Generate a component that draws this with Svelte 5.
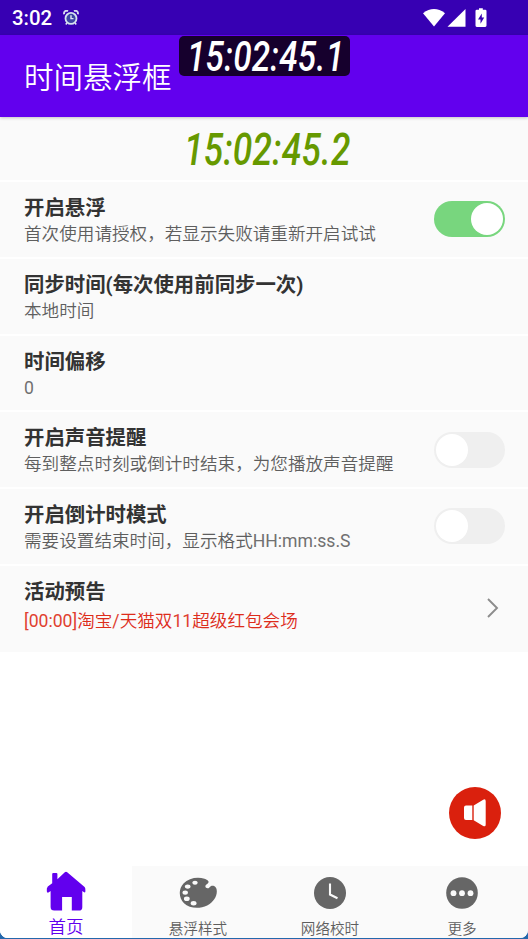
<script>
  const rows = [
    { title: '开启悬浮', sub: '首次使用请授权，若显示失败请重新开启试试', toggle: true, on: true },
    { title: '同步时间(每次使用前同步一次)', sub: '本地时间' },
    { title: '时间偏移', sub: '0' },
    { title: '开启声音提醒', sub: '每到整点时刻或倒计时结束，为您播放声音提醒', toggle: true, on: false },
    { title: '开启倒计时模式', sub: '需要设置结束时间，显示格式HH:mm:ss.S', toggle: true, on: false }
  ];
  let states = $state(rows.map((r) => !!r.on));

  // Splits a line into Latin and CJK runs so that each keeps its own weight.
  const runs = (text) => text.split(/([\x20-\x7e]+)/).filter(Boolean);
  const isLatin = (run) => /^[\x20-\x7e]+$/.test(run);
</script>

{#snippet mixed(text)}{#each runs(text) as run}{#if isLatin(run)}<span class="latin">{run}</span>{:else}{run}{/if}{/each}{/snippet}

<div class="window">
  <div class="screen">
    <div class="status">
      <span class="time">3:02</span>
      <svg class="alarm" width="16" height="16" viewBox="0 0 16 16" fill="none">
        <path d="M1.2 4.2A2.6 2.6 0 0 1 5 1.1M14.8 4.2A2.6 2.6 0 0 0 11 1.1" stroke="#d5d8ee" stroke-width="1.9" />
        <circle cx="8" cy="8.4" r="5.5" fill="#3d45a4" stroke="#d5e2ef" stroke-width="1.8" />
        <path d="M8 5.2V8.6H10.5M3.8 13 2.8 14.5M12.2 13l1 1.5" stroke="#e4e8f5" stroke-width="1.4" />
      </svg>
      <svg class="signals" width="66" height="20" viewBox="0 0 66 20" fill="#fff">
        <path d="M0 5.2Q11 -3 22 5.2L11 18.4Z" />
        <path d="M42.500 1V18.800H24.500Z" />
        <path d="M56 .2h3.800v1.500h2.400q1.300 0 1.300 1.300v14.600q0 1.300-1.300 1.300h-8.400q-1.300 0-1.300-1.300V3q0-1.300 1.300-1.300h2.200Z" />
        <path d="M58.800 5.500 55 11.500h2.500v4.200l3.700-6.300h-2.400Z" fill="#3700b3" />
      </svg>
    </div>
    <header>
      <h1>时间悬浮框</h1>
      <div class="floating"><span class="digits">15:02:45.1</span></div>
    </header>
    <main>
      <div class="clock"><div class="clockbox"><span class="digits">15:02:45.2</span></div></div>
      {#each rows as row, i}
        <section class="row">
          <div class="copy">
            <h2>{row.title}</h2>
            <p>{@render mixed(row.sub)}</p>
          </div>
          {#if row.toggle}
            <button class="switch" class:on={states[i]} aria-label={row.title} onclick={() => (states[i] = !states[i])}><i></i></button>
          {/if}
        </section>
      {/each}
      <section class="row notice">
        <div class="copy">
          <h2>活动预告</h2>
          <p>{@render mixed('[00:00]淘宝/天猫双11超级红包会场')}</p>
        </div>
        <svg class="chevron" width="12" height="20" viewBox="0 0 12 20" fill="none"><path d="M1 1 10 10 1 19" stroke="#8c8c8c" stroke-width="1.9" /></svg>
      </section>
    </main>
    <div class="space">
      <button class="sound" aria-label="声音">
        <svg width="52" height="52" viewBox="0 0 52 52" fill="#fff">
          <path d="M17 18.600h6.300v14.500H17q-2 0-2-2V20.600q0-2 2-2ZM24.700 18.400 34.200 12.700Q36.700 11.600 36.700 14.200V37.500Q36.700 40.200 34.200 39L24.700 33.200Z" />
        </svg>
      </button>
    </div>
    <nav>
      <div class="tab active">
        <svg width="40" height="40" viewBox="0 0 40 40" fill="#6200ee">
          <path d="M6.200 3q0-1 1-1h3.200q1 0 1 1v5.300L18.800 1.200Q20 .2 21.200 1.200L38.600 16q1 1 .8 4.200-.2 2-1.700.8L36.300 20v16.200q0 3.400-3.400 3.400h-7.100V25.900h-9.700v13.700H8.200q-3.600 0-3.600-3.600V20l-1.700 1.300Q1 22.300.8 20.300.4 17 1.800 15.500L6.200 12.200Z" />
        </svg>
        <span>首页</span>
      </div>
      <div class="tab">
        <svg width="38" height="32" viewBox="0 0 38 32">
          <path d="M25.500 1.700C18-.4 9.500 1.200 4.500 6.600-.9 12.400-.2 21.100 5 26.200c5.500 5.300 15.500 6 23.200 2.200 6.200-3.100 9.900-9 9.600-14.500-.2-3.700-2-5-4.300-5.100-1.300 0-2.200.6-3.100 1.700-1 1.100-2.800 1.100-3.600.1-.8-1-.4-2.200.6-3 1.500-1.100 2.500-2 2-3.300-.4-1.200-2-1.800-3.900-2.600Z" fill="#666" />
          <g fill="#fafafa"><ellipse cx="16" cy="5.800" rx="2.700" ry="2" /><ellipse cx="8.700" cy="9.600" rx="2.800" ry="2.100" /><ellipse cx="6.200" cy="15.600" rx="2.700" ry="2.200" /><ellipse cx="7.800" cy="21.800" rx="2.900" ry="2.300" /><ellipse cx="14.600" cy="26.300" rx="2.900" ry="2.200" /></g>
        </svg>
        <span>悬浮样式</span>
      </div>
      <div class="tab">
        <svg width="32" height="32" viewBox="0 0 32 32"><circle cx="16" cy="16" r="16" fill="#666" /><path d="M16 6.500v11l7.500 3.700" fill="none" stroke="#fafafa" stroke-width="2.100" /></svg>
        <span>网络校时</span>
      </div>
      <div class="tab">
        <svg width="32" height="32" viewBox="0 0 32 32"><circle cx="16" cy="16" r="15.800" fill="#666" /><g fill="#fafafa"><circle cx="7.500" cy="16.200" r="2.900" /><circle cx="16" cy="16.200" r="2.900" /><circle cx="24.500" cy="16.200" r="2.900" /></g></svg>
        <span>更多</span>
      </div>
    </nav>
  </div>
</div>

<style>
  :global(body) { margin: 0; }
  .window {
    width: 528px; height: 939px; box-sizing: border-box; padding-bottom: 1px;
    background: #2468ac; overflow: hidden;
    font-family: Roboto, "Noto Sans CJK SC", sans-serif;
  }
  .screen { height: 938px; background: #fff; border-radius: 0 0 8px 8px; overflow: hidden; display: flex; flex-direction: column; }
  .status { height: 35px; flex: none; background: #3700b3; display: flex; align-items: center; padding-left: 12px; color: #fff; }
  .time { font-size: 20.4px; font-weight: 500; line-height: 35px; width: 40px; padding-top: 2px; }
  .alarm { margin-left: 11px; }
  .signals { margin-left: auto; margin-right: 39px; }
  header { position: relative; z-index: 1; height: 82px; flex: none; display: flex; align-items: center; padding-left: 24px; background: #6200ee; color: #fff; box-shadow: 0 1px 3px rgba(0, 0, 0, .22); }
  h1 { margin: 0 0 3px; font-size: 29.500px; font-weight: 350; line-height: 40px; font-family: "Noto Sans CJK SC", sans-serif; }
  .floating { position: absolute; left: 179px; top: 1px; width: 171px; height: 40px; box-sizing: border-box; padding: 0 0 0 8px; border-radius: 5px; background: #16002d; color: #fff; }
  .digits { display: block; width: 200px; font: italic 500 43px/40px Roboto, sans-serif; letter-spacing: .3px; white-space: nowrap; transform: scaleX(.775); transform-origin: 0 50%; }
  main { flex: none; background: #fafafa; }
  .clock { height: 63px; display: flex; justify-content: center; border-bottom: 2px solid #fff; }
  .clockbox { width: 160px; margin-top: 13px; color: #690; }
  .clockbox .digits { font-size: 45px; transform: scaleX(.785); }
  .row { height: 76.800px; box-sizing: border-box; display: flex; padding: 12px 23px 0 24px; justify-content: space-between; border-bottom: 2px solid #fff; }
  .copy { min-width: 0; }
  h2 { margin: 0; font-size: 20.400px; line-height: 29px; font-weight: 700; color: #333; white-space: nowrap; }
  p { margin: -1px 0 0; font-size: 17.600px; line-height: 24px; font-weight: 350; color: #5e5e5e; white-space: nowrap; }
  .latin { font-weight: 400; color: #707070; }
  .switch { width: 71px; height: 36px; flex: none; margin: 7.300px 0 0; border: 0; padding: 2px; border-radius: 18px; background: #efefef; display: flex; }
  .switch i { width: 32px; height: 32px; border-radius: 50%; background: #fff; }
  .switch.on { background: #78d67e; justify-content: flex-end; }
  .notice { height: 86px; border: 0; padding-right: 29px; }
  .notice p { color: #dd2c1b; margin-top: 2px; }
  .notice .latin { color: #e03f30; }
  .chevron { margin-top: 20.500px; }
  .space { flex: 1; display: flex; justify-content: flex-end; align-items: flex-end; padding: 0 27px 27.500px; }
  .sound { width: 52px; height: 52px; border: 0; padding: 0; border-radius: 50%; background: #da200d; }
  .sound svg { display: block; }
  nav { height: 72px; flex: none; display: flex; background: #fafafa; }
  .tab { flex: 1; display: flex; flex-direction: column; align-items: center; color: #5e5e5e; font-weight: 350; }
  .tab svg { flex: none; margin-top: 11px; height: 32px; }
  .tab span { font-size: 14.600px; line-height: 20px; margin-top: 10px; }
  .active { background: #fff; color: #6200ee; }
  .active svg { margin-top: 5px; height: 40px; }
  .active span { font-size: 17.500px; line-height: 24px; margin-top: 4px; }
</style>
